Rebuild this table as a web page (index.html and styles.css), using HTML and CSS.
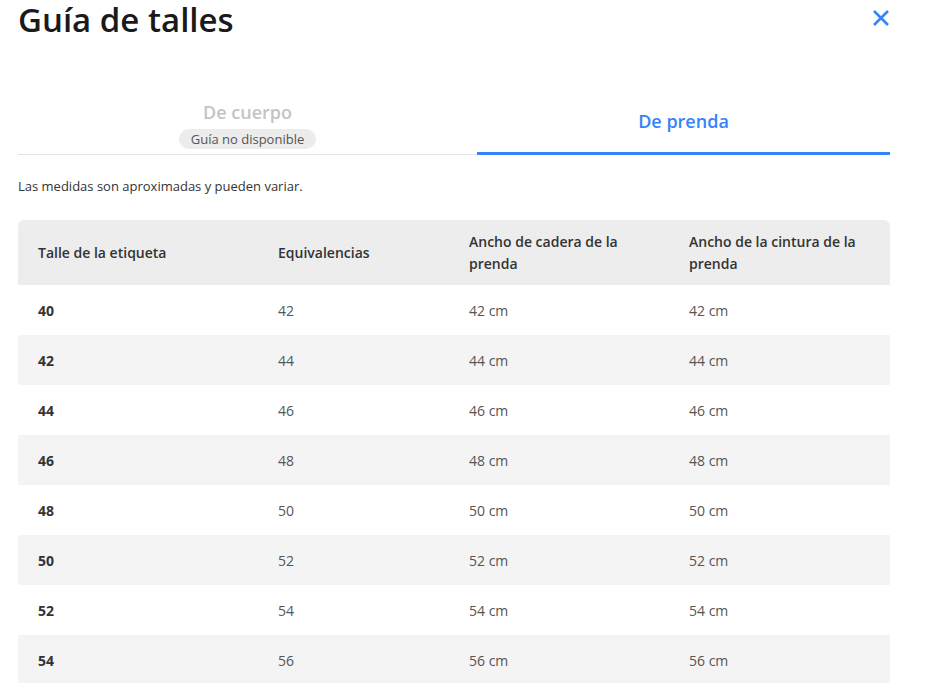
FILE: index.html
```html
<!DOCTYPE html>
<html lang="es">
<head>
<meta charset="utf-8">
<title>Guía de talles</title>
<link rel="stylesheet" href="styles.css">
</head>
<body>
<div class="modal">
  <header class="head">
    <h1 class="title">Guía de talles</h1>
    <button class="close" aria-label="Cerrar">
      <svg width="18" height="18" viewBox="0 0 18 18"><path d="M2 2 L16 16 M16 2 L2 16" stroke="#3483fa" stroke-width="2.6" stroke-linecap="butt"/></svg>
    </button>
  </header>
  <nav class="tabs">
    <div class="tab tab-disabled">
      <span class="tab-label">De cuerpo</span>
      <span class="badge">Guía no disponible</span>
    </div>
    <div class="tab tab-active">
      <span class="tab-label">De prenda</span>
    </div>
  </nav>
  <p class="note">Las medidas son aproximadas y pueden variar.</p>
  <table class="sizes">
    <colgroup>
      <col class="c1"><col class="c2"><col class="c3"><col class="c4">
    </colgroup>
    <thead>
      <tr><th>Talle de la etiqueta</th><th>Equivalencias</th><th>Ancho de cadera de la prenda</th><th>Ancho de la cintura de la prenda</th></tr>
    </thead>
    <tbody>
      <tr><td>40</td><td>42</td><td>42 cm</td><td>42 cm</td></tr>
      <tr><td>42</td><td>44</td><td>44 cm</td><td>44 cm</td></tr>
      <tr><td>44</td><td>46</td><td>46 cm</td><td>46 cm</td></tr>
      <tr><td>46</td><td>48</td><td>48 cm</td><td>48 cm</td></tr>
      <tr><td>48</td><td>50</td><td>50 cm</td><td>50 cm</td></tr>
      <tr><td>50</td><td>52</td><td>52 cm</td><td>52 cm</td></tr>
      <tr><td>52</td><td>54</td><td>54 cm</td><td>54 cm</td></tr>
      <tr><td>54</td><td>56</td><td>56 cm</td><td>56 cm</td></tr>
    </tbody>
  </table>
</div>
</body>
</html>
```
FILE: styles.css
```css
* { box-sizing: border-box; }
html, body { margin: 0; padding: 0; background: #fff; }
body {
  font-family: "Open Sans", "Liberation Sans", sans-serif;
  color: #333;
}
.modal {
  width: 890px;
  padding-left: 18px;
}
.head {
  display: flex;
  justify-content: space-between;
  align-items: flex-start;
}
.title {
  margin: 0;
  font-size: 33px;
  font-weight: 600;
  line-height: 40px;
  color: #1a1a1a;
}
.close {
  background: none;
  border: 0;
  padding: 0;
  margin: 9px 0 0 0;
  width: 18px;
  height: 18px;
  cursor: pointer;
  display: block;
}
.close svg { display: block; }
.tabs {
  display: grid;
  grid-template-columns: 459px 413px;
  margin-top: 60px;
  border-bottom: 1px solid #e2e2e2;
}
.tab {
  display: flex;
  flex-direction: column;
  align-items: center;
}
.tab-label {
  font-size: 18px;
  font-weight: 600;
  line-height: 24px;
}
.tab-disabled { padding-bottom: 5px; }
.tab-disabled .tab-label { color: #c4c4c4; }
.badge {
  margin-top: 5px;
  background: #ececec;
  color: #555;
  font-size: 13px;
  line-height: 20px;
  padding: 0 12px;
  border-radius: 10px;
}
.tab-active {
  justify-content: flex-start;
  padding-top: 9px;
  border-bottom: 3px solid #3483fa;
  border-radius: 0 0 1px 1px;
  margin-bottom: -1px;
}
.tab-active .tab-label { color: #3483fa; }
.note {
  margin: 23px 0 0 0;
  font-size: 13px;
  line-height: 16px;
  color: #333;
}
.sizes {
  margin-top: 26px;
  width: 872px;
  border-collapse: separate;
  border-spacing: 0;
  table-layout: fixed;
  font-size: 14px;
}
.c1 { width: 240px; }
.c2 { width: 191px; }
.c3 { width: 220px; }
.c4 { width: 221px; }
.sizes th {
  background: #ededed;
  text-align: left;
  font-weight: 600;
  color: #333;
  line-height: 22px;
  height: 65px;
  padding: 0 20px;
  vertical-align: middle;
}
.sizes th:first-child { border-top-left-radius: 6px; }
.sizes th:last-child { border-top-right-radius: 6px; }
.sizes td {
  height: 50px;
  padding: 0 20px;
  color: #555;
  vertical-align: middle;
}
.sizes td:first-child { font-weight: 700; color: #333; }
.sizes tbody tr:nth-child(even) td { background: #f4f4f4; }
```
